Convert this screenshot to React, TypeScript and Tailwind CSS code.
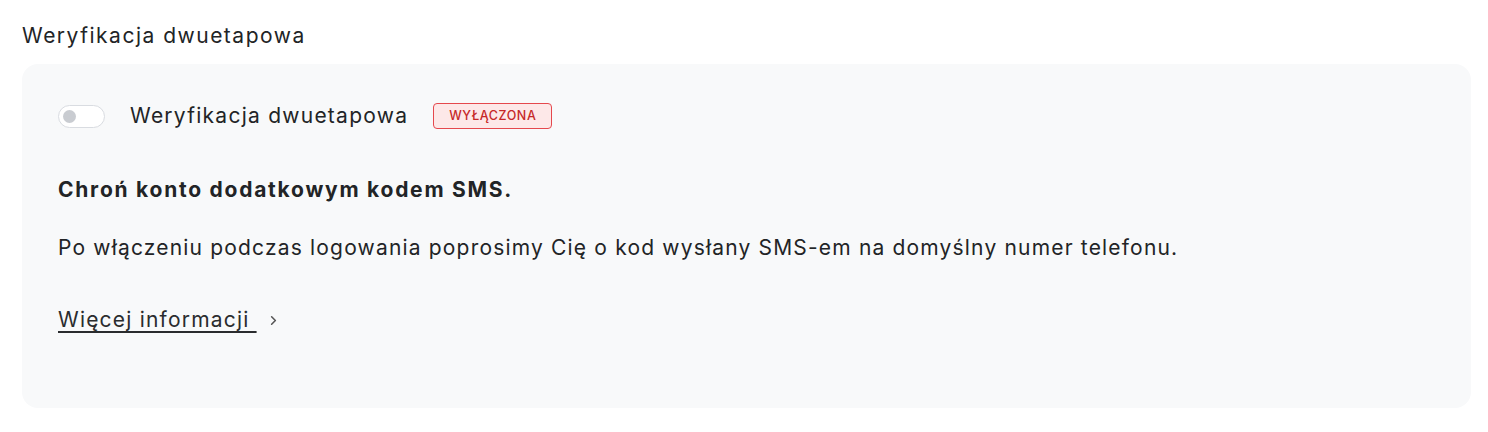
import React from "react"

const font = { fontFamily: "Inter, 'Noto Sans', sans-serif" }

function Toggle() {
  return (
    <button
      type="button"
      className="flex h-[23px] w-[47px] items-center rounded-full border border-[#d9dce1] bg-white px-[4px]"
    >
      <span className="h-[13px] w-[13px] rounded-full bg-[#c9ccd1]" />
    </button>
  )
}

export default function App() {
  return (
    <div className="min-h-screen bg-white pl-[22px] pr-[17px] pt-[22px] text-[#222426]" style={font}>
      <h2 className="text-[21px] leading-[28px] tracking-[1.5px]">Weryfikacja dwuetapowa</h2>

      <div className="mt-[14px] h-[344px] rounded-[16px] bg-[#f8f9fa] px-[36px] pt-[38px]">
        <div className="flex items-center">
          <Toggle />
          <span className="ml-[25px] text-[21px] leading-[28px] tracking-[1.25px]">Weryfikacja dwuetapowa</span>
          <span className="ml-[25px] rounded-[4px] border border-[#e5484d] bg-[#fde8e8] px-[15px] py-[3px] text-[12.5px] font-medium leading-[18px] tracking-[0.6px] text-[#c62828]">
            WYŁĄCZONA
          </span>
        </div>

        <p className="mt-[46px] text-[21px] font-bold leading-[28px] tracking-[1.75px]">
          Chroń konto dodatkowym kodem SMS.
        </p>

        <p className="mt-[30px] text-[21px] leading-[28px] tracking-[1.18px]">
          Po włączeniu podczas logowania poprosimy Cię o kod wysłany SMS-em na domyślny numer telefonu.
        </p>

        <a href="#" className="mt-[44px] flex items-center text-[21px] leading-[28px] tracking-[1.2px] text-[#2a2c2e]">
          <span className="underline underline-offset-[4px]">Więcej informacji&nbsp;</span>
          <svg className="ml-[9px] h-[15px] w-[15px] text-[#555]" viewBox="0 0 24 24" fill="none" stroke="currentColor" strokeWidth="2.5" strokeLinecap="round" strokeLinejoin="round">
            <path d="m9 6 6 6-6 6" />
          </svg>
        </a>
      </div>
    </div>
  )
}
